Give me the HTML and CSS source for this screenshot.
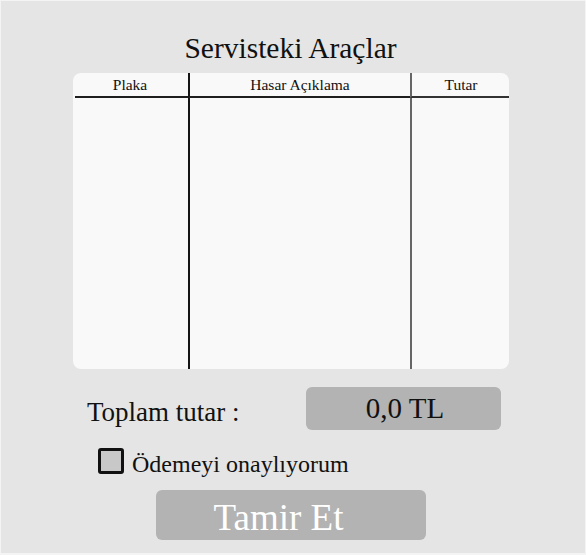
FILE: index.html
```html
<!DOCTYPE html>
<html lang="tr">
<head>
    <meta charset="UTF-8">
    <meta name="viewport" content="width=device-width, initial-scale=1.0">
    <title>Servisteki Araçlar</title>
    <link rel="stylesheet" href="styles.css">
</head>
<body>
    <div class="screen">
        <h1 class="title">Servisteki Araçlar</h1>

        <div class="table-panel">
            <div class="th">Plaka</div>
            <div class="th col-mid">Hasar Açıklama</div>
            <div class="th col-last">Tutar</div>
            <div class="td"></div>
            <div class="td col-mid"></div>
            <div class="td col-last"></div>
        </div>

        <div class="total-row">
            <span class="total-label">Toplam tutar :</span>
            <div class="total-box">0,0 TL</div>
        </div>

        <label class="confirm-row">
            <span class="check-box"></span>
            <span class="confirm-text">Ödemeyi onaylıyorum</span>
        </label>

        <button type="button" class="repair-btn">Tamir Et</button>
    </div>
</body>
</html>
```

FILE: styles.css
```css
* {
    box-sizing: border-box;
}

body {
    margin: 0;
    background: #f4f4f4;
    font-family: "Liberation Serif", "Times New Roman", serif;
    color: #111;
}

.screen {
    width: 584px;
    height: 552px;
    margin: 1px;
    background: #e5e5e5;
    display: flex;
    flex-direction: column;
    overflow: hidden;
}

.title {
    margin: 30px 0 0;
    font-size: 29.5px;
    font-weight: normal;
    line-height: 34px;
    height: 42px;
    text-align: center;
    padding-right: 5px;
}

.table-panel {
    width: 436px;
    height: 296px;
    margin-left: 72px;
    background: #f9f9f9;
    border-radius: 8px;
    display: grid;
    grid-template-columns: 115px 222px 99px;
    grid-template-rows: 25px 1fr;
}

.th {
    font-size: 15.5px;
    line-height: 23px;
    text-align: center;
    border-bottom: 2px solid #1e1e1e;
}

.th:first-child {
    margin-left: 2px;
    padding-right: 3px;
}

.col-mid {
    border-left: 2px solid #151515;
}

.col-last {
    border-left: 2px solid #666;
}

.th.col-last {
    border-bottom-color: #333;
    padding-left: 1px;
}

.total-row {
    display: flex;
    align-items: center;
    margin-top: 18px;
    padding-left: 86px;
}

.total-label {
    width: 219px;
    font-size: 27px;
    padding-top: 8px;
}

.total-box {
    width: 195px;
    height: 43px;
    background: #b3b3b3;
    border-radius: 6px;
    font-size: 29px;
    line-height: 43px;
    text-align: center;
    padding-left: 3px;
}

.confirm-row {
    display: flex;
    align-items: center;
    gap: 8px;
    margin-top: 14px;
    padding-left: 97px;
    font-size: 24px;
}

.confirm-text {
    padding-top: 7px;
}

.check-box {
    width: 26px;
    height: 26px;
    border: 3px solid #111;
    border-radius: 3px;
    background: #c8c8c8;
}

.repair-btn {
    width: 270px;
    height: 50px;
    margin: 12px 0 0 155px;
    background: #b3b3b3;
    border: none;
    border-radius: 6px;
    color: #fff;
    font-family: inherit;
    font-size: 37px;
    padding: 4px 25px 0 0;
    text-align: center;
}
```
